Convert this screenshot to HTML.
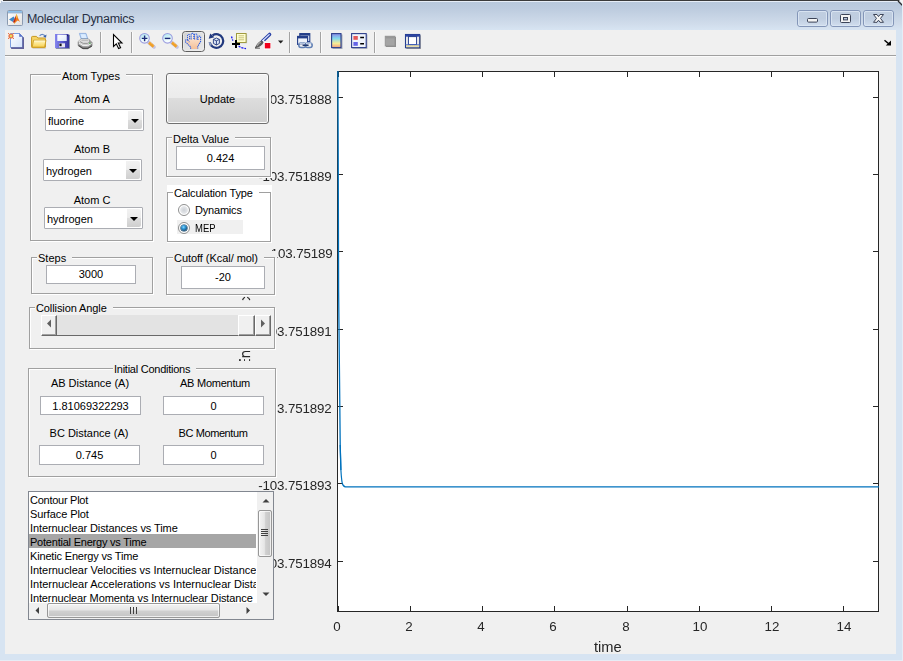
<!DOCTYPE html>
<html><head><meta charset="utf-8">
<style>
html,body{margin:0;padding:0;}
body{width:903px;height:661px;overflow:hidden;position:relative;background:#d7e4f2;font-family:"Liberation Sans",sans-serif;font-size:11px;color:#000;}
.a{position:absolute;}
#frame{left:0;top:0;width:903px;height:661px;background:#d7e4f2;}
#title{left:0;top:0;width:903px;height:30px;background:linear-gradient(#b7c7db 0,#bccbde 8px,#d0dceb 24px,#d7e4f2 30px);}
#ttext{left:27px;top:11px;font-size:12.500px;line-height:16px;color:#283044;white-space:nowrap;letter-spacing:-0.3px;}
#toolbar{left:5px;top:30px;width:891px;height:25px;background:#f0f0f0;}
#sep1{left:5px;top:55px;width:891px;height:1px;background:#a0a0a0;}
#sep2{left:5px;top:56px;width:891px;height:1px;background:#fbfbfb;}
#client{left:5px;top:57px;width:891px;height:597px;background:#f0f0f0;}
.lbl{white-space:nowrap;line-height:13px;}
.c{text-align:center;}
.panel{border:1px solid #a0a0a0;box-shadow:1px 1px 0 #fff, inset 1px 1px 0 #fff;background:#f0f0f0;}
.pt{background:#f0f0f0;padding:0 6px 0 1px;white-space:nowrap;line-height:13px;}
.edit{background:#fff;border:1px solid #abadb3;text-align:center;line-height:19px;box-sizing:border-box;}
.dd{background:#fff;border:1px solid #abadb3;box-sizing:border-box;line-height:20px;padding:1px 0 0 2px;border-radius:1px;}
.ddb{position:absolute;right:1px;top:1px;bottom:1px;width:14px;border-radius:0 2px 2px 0;background:linear-gradient(#f2f2f2 0,#ebebeb 49%,#dddddd 50%,#cfcfcf 100%);}
.ddb:after{content:"";position:absolute;left:3px;top:8px;border:4px solid transparent;border-top:4px solid #000;border-bottom:0;}
.yt{letter-spacing:-0.15px;margin-top:.5px;right:571.500px;font-size:13.33px;line-height:16px;white-space:nowrap;color:#262626;filter:grayscale(1);}
.xt{font-size:13.33px;line-height:16px;white-space:nowrap;color:#262626;width:40px;text-align:center;will-change:transform;}
.li{left:0;height:14px;line-height:16px;white-space:nowrap;width:227px;overflow:hidden;padding-left:1px;box-sizing:border-box;}
.sbtn{box-sizing:border-box;background:#f0f0f0;border-left:1px solid #fff;border-top:1px solid #fff;border-right:1px solid #696969;border-bottom:1px solid #696969;box-shadow:inset -1px -1px 0 #a0a0a0;}
.radio{width:12px;height:12px;box-sizing:border-box;border-radius:50%;border:1px solid #8e8f8f;background:radial-gradient(circle at 50% 50%,#cdd1d6 0,#e4e6e9 48%,#ffffff 62%,#ffffff 100%);}
.radio.on:after{content:"";position:absolute;left:2px;top:2px;width:6px;height:6px;border-radius:50%;background:radial-gradient(circle at 42% 36%,#8fd8fb 0,#2f9ada 32%,#15466c 78%,#103756 100%);box-shadow:0 0 0 .6px #1a4c70;}
.cover{background:#f0f0f0;}
</style></head><body>
<div id="frame" class="a"></div>
<div class="a" style="left:0;top:660px;width:903px;height:1px;background:#e6edf6"></div><div class="a" style="left:902px;top:4px;width:1px;height:657px;background:#e6edf6"></div>
<div id="title" class="a"></div>
<div id="ttext" class="a">Molecular Dynamics</div>
<div id="toolbar" class="a"></div>
<div id="sep1" class="a"></div><div id="sep2" class="a"></div>
<div id="client" class="a"></div>

<!-- titlebar decorations -->
<svg class="a" style="left:0;top:0" width="903" height="30" viewBox="0 0 903 30">
<defs>
<linearGradient id="gbtn" x1="0" y1="0" x2="0" y2="1"><stop offset="0" stop-color="#c0cee0"/><stop offset=".5" stop-color="#bfcde0"/><stop offset="1" stop-color="#d2dfef"/></linearGradient>
<linearGradient id="gico" x1="0" y1="0" x2="1" y2="1"><stop offset="0" stop-color="#ffffff"/><stop offset="1" stop-color="#e2e2e2"/></linearGradient>
</defs>
<path d="M0 0H903V1H0Z" fill="#3a3a3a"/>
<path d="M2 1.500H900" stroke="#e6edf6" stroke-width="1"/>
<path d="M0 0H3V1H1V3H0Z" fill="#f4f4f4"/>
<path d="M899 0L903 0V5Z" fill="#f4f4f4"/>
<path d="M898 1L902.500 5.500" stroke="#2c2c2c" stroke-width="1.300" fill="none"/>
<path d="M902.500 4V30" stroke="#e6edf6" stroke-width="1"/>
<!-- window buttons -->
<g fill="url(#gbtn)" stroke="#8496b8" stroke-width="1">
<rect x="797.500" y="10.500" width="30" height="16" rx="2.500"/>
<rect x="830.500" y="10.500" width="30" height="16" rx="2.500"/>
<rect x="863.500" y="10.500" width="30" height="16" rx="2.500"/>
</g>
<g fill="none" stroke="#dbe6f3" stroke-width="1" opacity=".9">
<rect x="798.500" y="11.500" width="28" height="14" rx="1.500"/>
<rect x="831.500" y="11.500" width="28" height="14" rx="1.500"/>
<rect x="864.500" y="11.500" width="28" height="14" rx="1.500"/>
</g>
<rect x="807.500" y="18.500" width="10" height="3.600" rx="1" fill="#f4f4f4" stroke="#3c4458" stroke-width="1"/>
<rect x="840.500" y="14.500" width="10" height="8" rx="1" fill="#f4f4f4" stroke="#3c4458" stroke-width="1"/>
<rect x="843.500" y="17.500" width="4" height="2.400" fill="#b8c6dc" stroke="#3c4458" stroke-width="1"/>
<path d="M873.500 14.500H877L878.500 16.600L880 14.500H883.500L880.500 18.400L883.500 22.300H880L878.500 20.200L877 22.300H873.500L876.500 18.400Z" fill="#f6f6f6" stroke="#3c4458" stroke-width="1" stroke-linejoin="round"/>
<!-- app icon -->
<g transform="translate(7,10)">
<rect x="0.500" y="0.500" width="15" height="15" rx="1" fill="url(#gico)" stroke="#8a9ab0" stroke-width="1"/>
<rect x="1" y="1" width="14" height="1.600" fill="#8cc0ea"/>
<path d="M1 2.900h14" stroke="#6e94be" stroke-width=".7"/>
<path d="M2 9.600L6.600 6.400L7.800 8.200L6 12Z" fill="#3f88c8"/>
<path d="M6 12L7.800 8.200L9.400 4.200L10.200 9L7.400 13.600Z" fill="#b8281c"/>
<path d="M9.400 4.200Q10.200 5 11 8L13 12Q11.600 10.600 10.600 10.400Q9 11.600 7.400 13.600Q8.800 10 9.400 4.200Z" fill="#ee7a1e"/>
<path d="M9.400 4.400Q9.800 6 9.600 8.200" stroke="#fbd23c" stroke-width=".8" fill="none"/>
<path d="M6.800 12.800L7.400 13.700L8.600 12.200Z" fill="#f8c030"/>
</g>
</svg>
<!-- toolbar icons -->
<svg class="a" style="left:0;top:30px" width="903" height="26" viewBox="0 30 903 26">
<defs>
<linearGradient id="gpage" x1="0" y1="0" x2="1" y2="1"><stop offset="0" stop-color="#fff"/><stop offset="1" stop-color="#d4e2fa"/></linearGradient>
<linearGradient id="gfold" x1="0" y1="0" x2="0" y2="1"><stop offset="0" stop-color="#fff8c4"/><stop offset="1" stop-color="#f8d050"/></linearGradient>
<linearGradient id="gsave" x1="0" y1="0" x2="1" y2="0"><stop offset="0" stop-color="#8686ee"/><stop offset=".5" stop-color="#5a5ad0"/><stop offset="1" stop-color="#34349c"/></linearGradient>
<linearGradient id="glens" x1="0" y1="0" x2="0.300" y2="1"><stop offset="0" stop-color="#a8e4ee"/><stop offset=".7" stop-color="#e8fafc"/><stop offset="1" stop-color="#fff"/></linearGradient>
<linearGradient id="gcb" x1="0" y1="0" x2="0" y2="1"><stop offset="0" stop-color="#8a8ae8"/><stop offset=".35" stop-color="#84d8ec"/><stop offset=".7" stop-color="#f6ec96"/><stop offset="1" stop-color="#f09c7c"/></linearGradient>
<linearGradient id="ghand" x1="0" y1="0" x2="0" y2="1"><stop offset="0" stop-color="#fff0e2"/><stop offset="1" stop-color="#f4c098"/></linearGradient>
<linearGradient id="gpan" x1="0" y1="0" x2="1" y2="1"><stop offset="0" stop-color="#cfcfcf"/><stop offset=".5" stop-color="#e2e2e2"/><stop offset="1" stop-color="#eaeaea"/></linearGradient>
<linearGradient id="gprn" x1="0" y1="0" x2="0" y2="1"><stop offset="0" stop-color="#d8d8d8"/><stop offset="1" stop-color="#8a8a8a"/></linearGradient>
</defs>
<!-- separators -->
<g shape-rendering="crispEdges"><path d="M100.500 32v21M131.500 32v21M289.500 32v21M320.500 32v21M374.500 32v21" stroke="#a3a3a3"/><path d="M101.500 32v21M132.500 32v21M290.500 32v21M321.500 32v21M375.500 32v21" stroke="#fafafa"/></g>
<!-- new -->
<g transform="translate(8,33)">
<path d="M3.500 2H12.500L16 5V16H3.500Z" fill="#62629a"/>
<path d="M2.500 0.500H11.500L14.500 3.500V14.500H2.500Z" fill="url(#gpage)" stroke="#7c9ee0" stroke-width="1"/>
<path d="M11.500 0.500V3.500H14.500Z" fill="#5c74c8" stroke="#5c74c8" stroke-width=".6"/>
<path d="M15 4v11H3" fill="none" stroke="#62629a" stroke-width="1.300"/>
<circle cx="3" cy="3" r="2.600" fill="#e8764a"/><circle cx="3" cy="3" r="1.200" fill="#e8e060"/>
<g fill="#e8764a"><rect x="0" y="0" width="1" height="1"/><rect x="5" y="0" width="1" height="1"/><rect x="0" y="5" width="1" height="1"/><rect x="5" y="5" width="1" height="1"/></g>
</g>
<!-- open -->
<g transform="translate(31,33)">
<path d="M8.600 2.800C10.400 .8 13 1 14 3.200" fill="none" stroke="#6488c4" stroke-width="1.100"/><path d="M15.500 1.400L15 4.800L12.200 3.800Z" fill="#3a60a8"/>
<path d="M1.500 14.800h13.500v.8h-13z" fill="#8a96b0" opacity=".5"/>
<path d="M0.600 4.200Q0.600 3.400 1.500 3.400H5.500L6.800 5H13.500Q14.400 5 14.400 6V14Q14.400 14.600 13.600 14.600H1.400Q0.600 14.600 0.600 13.800Z" fill="#f6d466" stroke="#c8981c" stroke-width="1"/>
<path d="M2.600 7.200H15L13.600 14.200H1.200Z" fill="url(#gfold)" stroke="#cc9c24" stroke-width=".9"/>
<path d="M3.200 8H14" stroke="#fffbe0" stroke-width=".8"/>
</g>
<!-- save -->
<g transform="translate(54,33)">
<rect x="1.800" y="1.800" width="14" height="14" fill="#3c4c7c" opacity=".75"/>
<path d="M1 1H14L15 2V15H1Z" fill="url(#gsave)"/>
<rect x="3.500" y="1.800" width="9" height="6.200" fill="#fff"/><rect x="3.500" y="1.800" width="9" height="6.200" fill="url(#gpage)" opacity=".8"/>
<rect x="5" y="10.300" width="6" height="4" fill="#e6e6f0"/><rect x="5.400" y="10.600" width="2.200" height="2.600" fill="#101018"/>
<rect x="13" y="2" width="1" height="1.200" fill="#202060"/>
</g>
<!-- print -->
<g transform="translate(77,33)">
<path d="M2.400 0.400H9L10.800 6H4.200Z" fill="#b4d6fa" stroke="#88a8dc" stroke-width=".8"/>
<path d="M3.600 1.200H8.400L9.600 5H4.800Z" fill="#dcecff"/>
<path d="M1.200 8.500L4 6H11.500L15 9.500V13L10.500 15.800H6L1.200 12.500Z" fill="url(#gprn)" stroke="#707070" stroke-width=".7"/>
<path d="M1.200 8.500L4 6H11.500L15 9.500L10.800 11.800H5.800Z" fill="#dcdcdc"/>
<path d="M11.500 6L15 9.500V13L12.800 14.400V11Z" fill="#7c7c7c" opacity=".7"/>
<path d="M2 10L6 12.600H10.800L14.600 10.500" fill="none" stroke="#f6f6f6" stroke-width="1"/>
<path d="M1.600 12.500L6 15.400H10.500L14.800 13" fill="none" stroke="#4c4c4c" stroke-width="1.100"/>
<path d="M3 8.600L6.200 10.400H10.500L13 9" fill="none" stroke="#8c8c8c" stroke-width=".9"/>
<path d="M4.500 7.200H11" stroke="#a0a0a0" stroke-width=".7"/>
<rect x="12.300" y="9.800" width="1.100" height="1.100" fill="#38c038"/>
</g>
<!-- pointer -->
<path d="M113.500 34.500V46.500L116.300 43.800L118.600 48.600L120.600 47.700L118.300 43H122Z" fill="#fff" stroke="#000" stroke-width="1.100" stroke-linejoin="miter"/>
<!-- zoom in -->
<g transform="translate(139,33)">
<path d="M9.600 9.400L15 14" stroke="#9a9ad8" stroke-width="3.600" stroke-linecap="round" opacity=".5"/>
<path d="M10 9.600L14.600 13.600" stroke="#f0a028" stroke-width="2.800" stroke-linecap="butt"/>
<path d="M10.800 9L15.200 12.800" stroke="#f8c060" stroke-width="1" stroke-dasharray="1 1"/>
<circle cx="5.500" cy="5.300" r="4.800" fill="url(#glens)" stroke="#9c9ee0" stroke-width="1.100"/>
<path d="M2.800 5.400h5.600M5.600 2.600v5.600" stroke="#1c2c78" stroke-width="1.400"/>
</g>
<!-- zoom out -->
<g transform="translate(162,33)">
<path d="M9.600 9.400L15 14" stroke="#9a9ad8" stroke-width="3.600" stroke-linecap="round" opacity=".5"/>
<path d="M10 9.600L14.600 13.600" stroke="#f0a028" stroke-width="2.800" stroke-linecap="butt"/>
<path d="M10.800 9L15.200 12.800" stroke="#f8c060" stroke-width="1" stroke-dasharray="1 1"/>
<circle cx="5.500" cy="5.300" r="4.800" fill="url(#glens)" stroke="#9c9ee0" stroke-width="1.100"/>
<path d="M2.800 5.400h5.600" stroke="#1c2c78" stroke-width="1.400"/>
</g>
<!-- pan (pressed) -->
<rect x="182.500" y="31.500" width="22" height="20" rx="3" ry="3" fill="url(#gpan)" stroke="#5e5e5e" stroke-width="1"/>
<rect x="183.500" y="32.500" width="20" height="18" rx="2" ry="2" fill="none" stroke="#f2f2f2" stroke-width="1" opacity=".5"/>
<g transform="translate(185,33)">
<path d="M5.600 16V14L1 9.400Q0 8 .8 7Q1.600 6.200 2.600 6.800V2.600Q2.600 1.500 3.600 1.500Q4.600 1.500 4.600 2.600V5.500H6.200V1.300Q6.200 .3 7.500 .3Q8.800 .3 8.800 1.300V5.500H9.600V2Q9.600 1 10.800 1Q12 1 12 2V6H13V4.200Q13 3.100 14.300 3.100Q15.600 3.100 15.600 4.200V8.500L12.800 13.400V16Z" fill="url(#ghand)"/>
<path d="M5.600 15.800V14L1 9.400Q0 8 .8 7Q1.600 6.200 2.600 6.800V2.600Q2.600 1.500 3.600 1.500Q4.600 1.500 4.600 2.600V7M6.200 6.500V1.300Q6.200 .3 7.500 .3Q8.800 .3 8.800 1.300V6.500M9.600 6.500V2Q9.600 1 10.800 1Q12 1 12 2V7M13 7V4.200Q13 3.100 14.300 3.100Q15.600 3.100 15.600 4.200V8.500L12.800 13.400V15.800" fill="none" stroke="#2a5ce0" stroke-width="1.100" stroke-dasharray="1.300 .7"/>
<path d="M2.600 7L4.400 9.200" stroke="#2a5ce0" stroke-width="1.100" stroke-dasharray="1.300 .7"/>
</g>
<!-- rotate -->
<g transform="translate(208,33)">
<path d="M4.500 2.400A6.800 6.800 0 1 1 1.700 9.200" fill="none" stroke="#22397e" stroke-width="2.200"/>
<path d="M1.700 9.200Q1.900 11 3 12.600" fill="none" stroke="#8c9cc4" stroke-width="1.800"/>
<path d="M.7 5.800L2.300 .5L6.400 4.200Z" fill="#22397e"/>
<path d="M5.400 6.400L8.400 5L11.400 6.400V10.400L8.400 12L5.400 10.400Z" fill="#dfe8f8" stroke="#22397e" stroke-width=".9"/>
<path d="M5.400 6.400L8.400 7.800L11.400 6.400M8.400 7.800V12" fill="none" stroke="#22397e" stroke-width=".9"/>
</g>
<!-- data cursor -->
<g transform="translate(231,33)">
<path d="M0.500 3.500L1.800 7.600" stroke="#1414f0" stroke-width="1.300" stroke-dasharray="2 1"/>
<path d="M7.600 13L10 14.600L15 15.600" fill="none" stroke="#1414f0" stroke-width="1.300" stroke-dasharray="2.200 1"/>
<rect x="6.500" y="1.300" width="9.600" height="9" fill="#8a9aa8" opacity=".5"/>
<rect x="5.500" y="0.500" width="9.600" height="9" fill="#ffffd2" stroke="#a09a40" stroke-width="1"/>
<path d="M7.500 2.800h5.600M7.500 4.800h5.600M7.500 6.800h5.600" stroke="#c4bc74" stroke-width=".9"/>
<path d="M1 11h8M5 7v8" stroke="#000" stroke-width="2"/>
</g>
<!-- brush -->
<g transform="translate(254,33)">
<path d="M15.600 1.400L8.400 8.200" stroke="#2c44a8" stroke-width="3.400" stroke-linecap="round"/>
<path d="M15.200 1.600L8.800 7.600" stroke="#dfe6ff" stroke-width="1.300" stroke-linecap="round"/>
<path d="M8.800 7L10.200 8.600L7.600 11" fill="none" stroke="#f4f4f4" stroke-width="1.400"/>
<path d="M7.600 7.400Q3.600 9 1 14.400Q0.800 15.200 1.800 15Q7.400 14 9.600 9.600Z" fill="#5c5c5c"/>
<path d="M6.800 9Q4.400 10.400 3 13" fill="none" stroke="#a8a8a8" stroke-width="1.200"/>
<path d="M1 15.200H6" stroke="#404040" stroke-width=".8"/>
<rect x="10" y="9.500" width="7" height="7" fill="#fff"/>
<rect x="10.800" y="10" width="5.600" height="5.400" fill="#f0001c"/>
</g>
<path d="M278 40.500h5.400l-2.700 3z" fill="#202020"/>
<!-- link -->
<g transform="translate(297,33)">
<rect x="2.800" y="0.600" width="10" height="8" fill="#e6ecf8" stroke="#223c88" stroke-width="1.100"/><rect x="2.800" y="0.600" width="10" height="2" fill="#223c88"/>
<rect x="0.600" y="3.400" width="10" height="8" fill="#eef2fa" stroke="#223c88" stroke-width="1.100"/><rect x="0.600" y="3.400" width="10" height="2" fill="#223c88"/>
<rect x="1.600" y="9" width="14" height="6.600" rx="3" fill="#f0f0f0" opacity=".7"/>
<rect x="1.800" y="10" width="7" height="4.600" rx="2.300" fill="none" stroke="#5e7eb4" stroke-width="1.500"/>
<rect x="8.200" y="10" width="7" height="4.600" rx="2.300" fill="none" stroke="#5e7eb4" stroke-width="1.500"/>
<path d="M5.600 12.300h6" stroke="#22386c" stroke-width="1.400"/>
<path d="M2.600 10.600Q5 9.600 8 10.600M9 10.600Q11.600 9.600 14.400 10.600" fill="none" stroke="#dfe8f6" stroke-width=".8"/>
</g>
<!-- colorbar -->
<rect x="332.500" y="34.500" width="10" height="14.500" fill="#6a7486" opacity=".55"/>
<rect x="331.600" y="33.600" width="9.400" height="14" fill="url(#gcb)" stroke="#2c3e8c" stroke-width="1.100"/>
<!-- legend -->
<g transform="translate(351,33)">
<rect x="1.400" y="1.400" width="15" height="14.400" fill="#6a7486" opacity=".55"/>
<rect x="0.600" y="0.600" width="14.600" height="14" fill="#f0f4fc" stroke="#2c3e8c" stroke-width="1.100"/>
<rect x="2.400" y="3" width="4.400" height="3.800" fill="#e45858"/><rect x="2.400" y="9" width="4.400" height="3.800" fill="#6464e6"/>
<path d="M9.200 4.600h3.800M9.200 10.800h3.800" stroke="#000" stroke-width="1.500"/>
</g>
<!-- gray square -->
<rect x="386" y="37" width="10" height="10" fill="#8e8e8e"/>
<rect x="385.200" y="36.200" width="9.800" height="9.800" fill="#a4a4a4" stroke="#909090" stroke-width=".8"/>
<rect x="385.600" y="36.400" width="9" height="2" fill="#969696"/>
<!-- film -->
<g transform="translate(405,34)">
<rect x="1.300" y="1.200" width="14.600" height="13.800" fill="#707070" opacity=".7"/>
<rect x="0.500" y="0.500" width="14.200" height="13.200" fill="#fff" stroke="#243c8c" stroke-width="1.100"/>
<rect x="0.500" y="0.500" width="14.200" height="2.200" fill="#2c44a4"/>
<rect x="3.400" y="2.600" width="8.200" height="8" fill="#fff" stroke="#243c8c" stroke-width="1"/>
<path d="M2 3.600v6.600M13.200 3.600v6.600" stroke="#c8c8c8" stroke-width="1.200" stroke-dasharray="1 1"/>
<rect x="1" y="11" width="13.200" height="2.200" fill="#e6deb0"/>
<path d="M1.400 11.600h12.600" stroke="#b8b090" stroke-width=".8" stroke-dasharray="1 1"/>
<path d="M0.500 10.600h14" stroke="#4868c8" stroke-width=".8"/>
</g>
<!-- corner arrow -->
<path d="M884.500 40.200l4.500 3.800" fill="none" stroke="#000" stroke-width="1.500"/><path d="M891 40.500v5h-5.200z" fill="#000"/>
</svg>
<!-- axes -->
<svg class="a" style="left:0;top:0" width="903" height="661" viewBox="0 0 903 661">
<rect x="338" y="71" width="541" height="541" fill="#fff"/>
<g stroke="#262626" stroke-width="1" fill="none" shape-rendering="crispEdges">
<path d="M337.500 71v541M337 611.500h542M878.500 71v541M337 71.500h542"/>
<path d="M338.5 611v-5M338.5 72v5M410.5 611v-5M410.5 72v5M482.5 611v-5M482.5 72v5M554.5 611v-5M554.5 72v5M627.5 611v-5M627.5 72v5M699.5 611v-5M699.5 72v5M771.5 611v-5M771.5 72v5M843.5 611v-5M843.5 72v5"/>
<path d="M338 97.5h5M878 97.5h-5M338 174.5h5M878 174.5h-5M338 251.5h5M878 251.5h-5M338 329.5h5M878 329.5h-5M338 406.5h5M878 406.5h-5M338 483.5h5M878 483.5h-5M338 561.5h5M878 561.5h-5"/>
</g>
<path d="M337.900 71L338.200 150L338.600 290L339.700 395L340.200 445L340.900 470" stroke="#0072bd" stroke-width="1.300" fill="none"/><path d="M340.200 445L340.900 470Q341.500 480 342.300 483.500Q343.300 486.700 345.500 486.950H879" stroke="#0072bd" stroke-width="1.200" fill="none"/>
</svg>
<div class="a yt" style="top:91px">-103.751888</div>
<div class="a yt" style="top:168px">-103.751889</div>
<div class="a yt" style="top:245px;right:570.500px">-103.75189</div>
<div class="a yt" style="top:323px">-103.751891</div>
<div class="a yt" style="top:400px">-103.751892</div>
<div class="a yt" style="top:477px">-103.751893</div>
<div class="a yt" style="top:555px">-103.751894</div>
<div class="a xt" style="left:317.2px;top:619px">0</div>
<div class="a xt" style="left:389.2px;top:619px">2</div>
<div class="a xt" style="left:461.2px;top:619px">4</div>
<div class="a xt" style="left:533.2px;top:619px">6</div>
<div class="a xt" style="left:606.2px;top:619px">8</div>
<div class="a xt" style="left:679.5px;top:619px">10</div>
<div class="a xt" style="left:751.5px;top:619px">12</div>
<div class="a xt" style="left:823.5px;top:619px">14</div>
<div class="a" style="left:594px;top:638px;font-size:14.670px;line-height:18px;color:#262626;filter:grayscale(1)">time</div>

<!-- covers emulate uipanel rects that include title strip -->
<div class="a cover" style="left:166px;top:73px;width:105px;height:51px"></div>
<div class="a cover" style="left:166px;top:131px;width:106px;height:46px"></div>
<div class="a cover" style="left:29px;top:251px;width:124px;height:45px"></div>
<div class="a cover" style="left:166px;top:250.500px;width:111px;height:46.500px"></div>
<div class="a cover" style="left:29px;top:301px;width:247px;height:49px"></div>
<div class="a cover" style="left:28px;top:362px;width:249px;height:116px"></div>

<!-- ylabel fragments peeking between panels -->
<svg class="a" style="left:236px;top:295px" width="20" height="70" viewBox="236 295 20 70">
<g fill="none" stroke="#262626" stroke-width="1.200">
<path d="M242.600 300.200Q243 298 245 297.300M247.200 297.300Q249.400 298 249.800 300.200"/>
<path d="M250.100 351.500H245.500Q242.600 351.500 242.600 354Q242.600 356 244.500 356.500M242.200 356.600H250.100"/>
</g>
<g fill="#262626"><rect x="239" y="359.200" width="1.800" height="1.700"/><rect x="244" y="359.200" width="1" height="1.700"/><rect x="249" y="359.200" width="1.100" height="1.700"/></g>
</svg>
<!-- panels -->
<div class="a panel" style="left:30px;top:74px;width:121px;height:165px"></div>
<div class="a pt" style="left:61px;top:70px">Atom Types</div>
<div class="a lbl c" style="left:42px;top:93px;width:100px">Atom A</div>
<div class="a dd" style="left:45px;top:109px;width:99px;height:22px">fluorine<div class="ddb"></div></div>
<div class="a lbl c" style="left:42px;top:143px;width:100px">Atom B</div>
<div class="a dd" style="left:43px;top:159px;width:99px;height:22px">hydrogen<div class="ddb"></div></div>
<div class="a lbl c" style="left:42px;top:194px;width:100px">Atom C</div>
<div class="a dd" style="left:44px;top:207px;width:99px;height:22px">hydrogen<div class="ddb"></div></div>

<div class="a" id="upd" style="left:166px;top:73px;width:103px;height:51px;box-sizing:border-box;border:1px solid #707070;border-radius:3px;background:linear-gradient(#f2f2f2 0,#ebebeb 49%,#dddddd 50%,#cfcfcf 100%);box-shadow:inset 0 0 0 1px #fcfcfc;text-align:center;line-height:51px">Update</div>

<div class="a panel" style="left:166px;top:137px;width:103px;height:38px"></div>
<div class="a pt" style="left:172px;top:133px">Delta Value</div>
<div class="a edit" style="left:176px;top:146px;width:89px;height:24px;line-height:22px">0.424</div>

<div class="a" style="left:167px;top:185px;width:105px;height:58px;background:#fff"></div>
<div class="a panel" style="left:167px;top:192px;width:102px;height:48px;background:#fff"></div>
<div class="a pt" style="left:173px;top:187px;background:#fff;letter-spacing:-0.15px">Calculation Type</div>
<div class="a lbl" style="left:195px;top:204px;letter-spacing:-0.2px">Dynamics</div>
<div class="a" style="left:177px;top:220px;width:66px;height:14px;background:#f0f0f0"></div>
<div class="a lbl" style="left:195px;top:222px;transform:scaleX(.86);transform-origin:left">MEP</div>
<div class="a radio" style="left:178px;top:204px"></div>
<div class="a radio on" style="left:178px;top:222px"></div>

<div class="a panel" style="left:31px;top:257px;width:120px;height:35px"></div>
<div class="a pt" style="left:37px;top:252px">Steps</div>
<div class="a edit" style="left:46px;top:265px;width:90px;height:19px;line-height:17px">3000</div>

<div class="a panel" style="left:166px;top:257px;width:107px;height:36px"></div>
<div class="a pt" style="left:173px;top:252px;letter-spacing:-0.05px">Cutoff (Kcal/ mol)</div>
<div class="a edit" style="left:181px;top:266px;width:84px;height:23px;line-height:21px">-20</div>

<div class="a panel" style="left:29px;top:307px;width:244px;height:40px"></div>
<div class="a pt" style="left:35px;top:302px;letter-spacing:-0.1px">Collision Angle</div>
<!-- slider -->
<div class="a" style="left:41px;top:315px;width:230px;height:21px;background:#e3e3e3;border-bottom:1px solid #696969;box-sizing:border-box"></div>
<div class="a sbtn" style="left:41px;top:315px;width:16px;height:21px"></div>
<div class="a sbtn" style="left:238px;top:315px;width:17px;height:21px"></div>
<div class="a sbtn" style="left:255px;top:315px;width:16px;height:21px"></div>
<svg class="a" style="left:41px;top:315px" width="230" height="21"><path d="M10 4.500v8l-4-4z" fill="#606060"/><path d="M220 4.500v8l4-4z" fill="#606060"/></svg>

<div class="a panel" style="left:28px;top:368px;width:246px;height:107px"></div>
<div class="a pt" style="left:113px;top:363px;letter-spacing:-0.25px">Initial Conditions</div>
<div class="a lbl c" style="left:40px;top:377px;width:100px">AB Distance (A)</div>
<div class="a lbl c" style="left:165px;top:377px;width:100px;letter-spacing:-0.25px">AB Momentum</div>
<div class="a edit" style="left:40px;top:396px;width:101px;height:19px;line-height:18px">1.81069322293</div>
<div class="a edit" style="left:163px;top:396px;width:101px;height:19px;line-height:18px">0</div>
<div class="a lbl c" style="left:39px;top:427px;width:100px">BC Distance (A)</div>
<div class="a lbl c" style="left:163px;top:427px;width:100px;letter-spacing:-0.4px">BC Momentum</div>
<div class="a edit" style="left:39px;top:445px;width:101px;height:20px;line-height:18px">0.745</div>
<div class="a edit" style="left:163px;top:445px;width:101px;height:20px;line-height:18px">0</div>

<!-- listbox -->
<div class="a" id="lb" style="left:28px;top:491px;width:246px;height:129px;box-sizing:border-box;border:1px solid #828790;background:#fff;overflow:hidden">
<div class="a li" style="letter-spacing:-0.26px;top:0px">Contour Plot</div>
<div class="a li" style="letter-spacing:-0.09px;top:14px">Surface Plot</div>
<div class="a li" style="letter-spacing:-0.09px;top:28px">Internuclear Distances vs Time</div>
<div class="a li" style="letter-spacing:-0.22px;top:42px;background:#a6a6a6">Potential Energy vs Time</div>
<div class="a li" style="letter-spacing:-0.17px;top:56px">Kinetic Energy vs Time</div>
<div class="a li" style="letter-spacing:-0.05px;top:70px">Internuclear Velocities vs Internuclear Distance</div>
<div class="a li" style="letter-spacing:-0.02px;top:84px">Internuclear Accelerations vs Internuclear Distance</div>
<div class="a li" style="letter-spacing:-0.12px;top:98px">Internuclear Momenta vs Internuclear Distance</div>
<!-- v scrollbar -->
<div class="a" style="left:228px;top:0;width:16px;height:127px;background:#f0f0f0"></div>
<div class="a" style="left:229px;top:18px;width:14px;height:47px;box-sizing:border-box;border:1px solid #979797;border-radius:2px;background:linear-gradient(90deg,#f4f4f4 0,#e6e6e6 45%,#d0d0d0 55%,#c4c4c4 100%);box-shadow:inset 0 0 0 1px rgba(255,255,255,.7)"></div>
<!-- h scrollbar -->
<div class="a" style="left:0;top:110.500px;width:228px;height:17px;background:#f0f0f0"></div>
<div class="a" style="left:18px;top:111px;width:173px;height:15px;box-sizing:border-box;border:1px solid #979797;border-radius:2px;background:linear-gradient(#f4f4f4 0,#e6e6e6 45%,#d0d0d0 55%,#c4c4c4 100%);box-shadow:inset 0 0 0 1px rgba(255,255,255,.7)"></div>
<svg class="a" style="left:0;top:0" width="244" height="127"><g fill="#404040"><path d="M233.500 10.500l3.500-3.500l3.500 3.500z"/><path d="M233.500 100.500l3.500 3.500l3.500-3.500z"/><path d="M10 115v7l-3.500-3.500z"/><path d="M217.500 115v7l3.500-3.500z"/></g>
<g stroke="#404040" stroke-width="1" shape-rendering="crispEdges"><path d="M232 37.500h7M232 39.500h7M232 41.500h7M232 43.500h7"/><path d="M101.500 115v7M104.500 115v7M107.500 115v7"/></g></svg>
</div>
</body></html>
